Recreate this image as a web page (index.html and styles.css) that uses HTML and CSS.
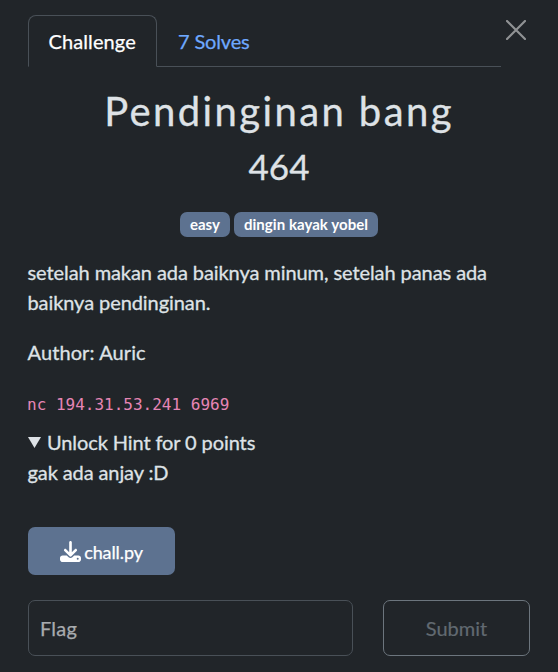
FILE: index.html
```html
<!DOCTYPE html>
<html lang="en">
<head>
<meta charset="utf-8">
<title>Pendinginan bang</title>
<link rel="stylesheet" href="styles.css">
</head>
<body>
<main class="modal">
  <button class="close" aria-label="Close"><svg viewBox="0 0 20 20"><path d="M1 1l18 18M19 1L1 19"/></svg></button>
  <nav class="tabs"><a class="tab active">Challenge</a><a class="tab">7 Solves</a></nav>
  <h2 class="name">Pendinginan bang</h2>
  <h3 class="value">464</h3>
  <div class="tags"><span class="tag">easy</span><span class="tag">dingin kayak yobel</span></div>
  <p class="desc">setelah makan ada baiknya minum, setelah panas ada baiknya pendinginan.</p>
  <p class="desc author">Author: Auric</p>
  <p class="desc conn"><code>nc 194.31.53.241 6969</code></p>
  <section class="hint"><div class="summary"><svg viewBox="0 0 13 11"><path d="M0 0h13L6.500 11z"/></svg><span>Unlock Hint for 0 points</span></div><div>gak ada anjay :D</div></section>
  <a class="file"><svg viewBox="0 0 512 512"><path d="M288 32c0-17.700-14.300-32-32-32s-32 14.300-32 32V274.700l-73.400-73.400c-12.500-12.500-32.800-12.500-45.300 0s-12.500 32.800 0 45.300l128 128c12.500 12.500 32.800 12.500 45.300 0l128-128c12.500-12.500 12.500-32.800 0-45.300s-32.800-12.500-45.300 0L288 274.700V32zM64 352c-35.300 0-64 28.700-64 64v32c0 35.300 28.700 64 64 64H448c35.300 0 64-28.700 64-64V416c0-35.300-28.700-64-64-64H346.500l-45.300 45.300c-25 25-65.500 25-90.500 0L165.500 352H64zm368 56a24 24 0 1 1 0 48 24 24 0 1 1 0-48z"/></svg><span>chall.py</span></a>
  <form class="submit-row"><input class="flag" placeholder="Flag" aria-label="Flag"><button class="submit" type="button" disabled>Submit</button></form>
</main>
</body>
</html>
```

FILE: styles.css
```css
* { box-sizing: border-box; }
body {
  margin: 0;
  background: #212529;
  color: #dee2e6;
  font: 20px/30px Lato, sans-serif;
}
.modal {
  position: relative;
  height: 672px;
  padding: 15px 28px 0;
  overflow: hidden;
}
.close {
  position: absolute;
  top: 20px;
  right: 32px;
  width: 20px;
  height: 20px;
  padding: 0;
  border: 0;
  background: none;
}
.close svg { display: block; width: 20px; height: 20px; stroke: #909294; stroke-width: 2.2; stroke-linecap: round; }
.tabs { display: flex; width: 473px; height: 52px; border-bottom: 1px solid #495057; -webkit-text-stroke: 0.25px; }
.tab { height: 52px; padding: 10px 20px; border: 1px solid transparent; color: #6ea8fe; letter-spacing: -0.15px; }
.tab.active { width: 129px; padding-left: 19.5px; border-color: #495057 #495057 #212529; border-radius: 8px 8px 0 0; background: #212529; color: #fff; letter-spacing: 0.1px; }
.name { margin: 20px -10px 0; font-size: 40px; line-height: 48px; font-weight: 400; letter-spacing: 2.4px; text-align: center; -webkit-text-stroke: 0.3px; }
.value { margin: 10px 0 0; font-size: 35px; line-height: 42px; font-weight: 400; text-align: center; -webkit-text-stroke: 0.3px; }
.tags { display: flex; justify-content: center; gap: 4px; margin: 25px 0 20px; }
.tag { width: 50px; height: 25px; padding: 5px 0; border-radius: 7px; background: #5d7290; color: #fff; font-size: 15px; line-height: 15px; font-weight: 700; text-align: center; }
.tag + .tag { width: 144px; letter-spacing: 0.05px; }
.desc { margin: 0 -0.5px 20px; letter-spacing: -0.08px; -webkit-text-stroke: 0.3px; }
.author { letter-spacing: 0.1px; }
.conn { height: 30px; margin: 0 -1px 10px; letter-spacing: 0; -webkit-text-stroke: 0; }
code { color: #e685b5; font: 16px/28px "DejaVu Sans Mono", monospace; }
.hint { margin: 0 -0.5px; letter-spacing: -0.1px; -webkit-text-stroke: 0.3px; }
.summary { display: flex; align-items: center; gap: 6px; }
.summary svg { width: 13px; height: 11px; margin-left: 0.5px; fill: #dee2e6; }
.file { display: flex; align-items: center; justify-content: center; gap: 3px; width: 147px; height: 48px; margin-top: 40px; border-radius: 7px; background: #5d7290; color: #fff; font-size: 18px; -webkit-text-stroke: 0.25px; }
.file svg { width: 21px; height: 21px; fill: #fff; stroke: none; }
.file span { padding-top: 2px; letter-spacing: -0.1px; }
.submit-row { display: flex; justify-content: space-between; margin: 25px 0 0; }
.flag { width: 325px; height: 56px; padding: 0 12px 0 11px; border: 1px solid #495057; border-radius: 7px; background: #212529; color: #dee2e6; font: 20px Lato, sans-serif; letter-spacing: 0.2px; -webkit-text-stroke: 0.25px; }
.flag::placeholder { color: #a8abae; opacity: 1; }
.submit { width: 147px; height: 56px; border: 1px solid #6c757d; border-radius: 7px; background: none; color: #626a71; font: 20px Lato, sans-serif; -webkit-text-stroke: 0.2px; }
```
